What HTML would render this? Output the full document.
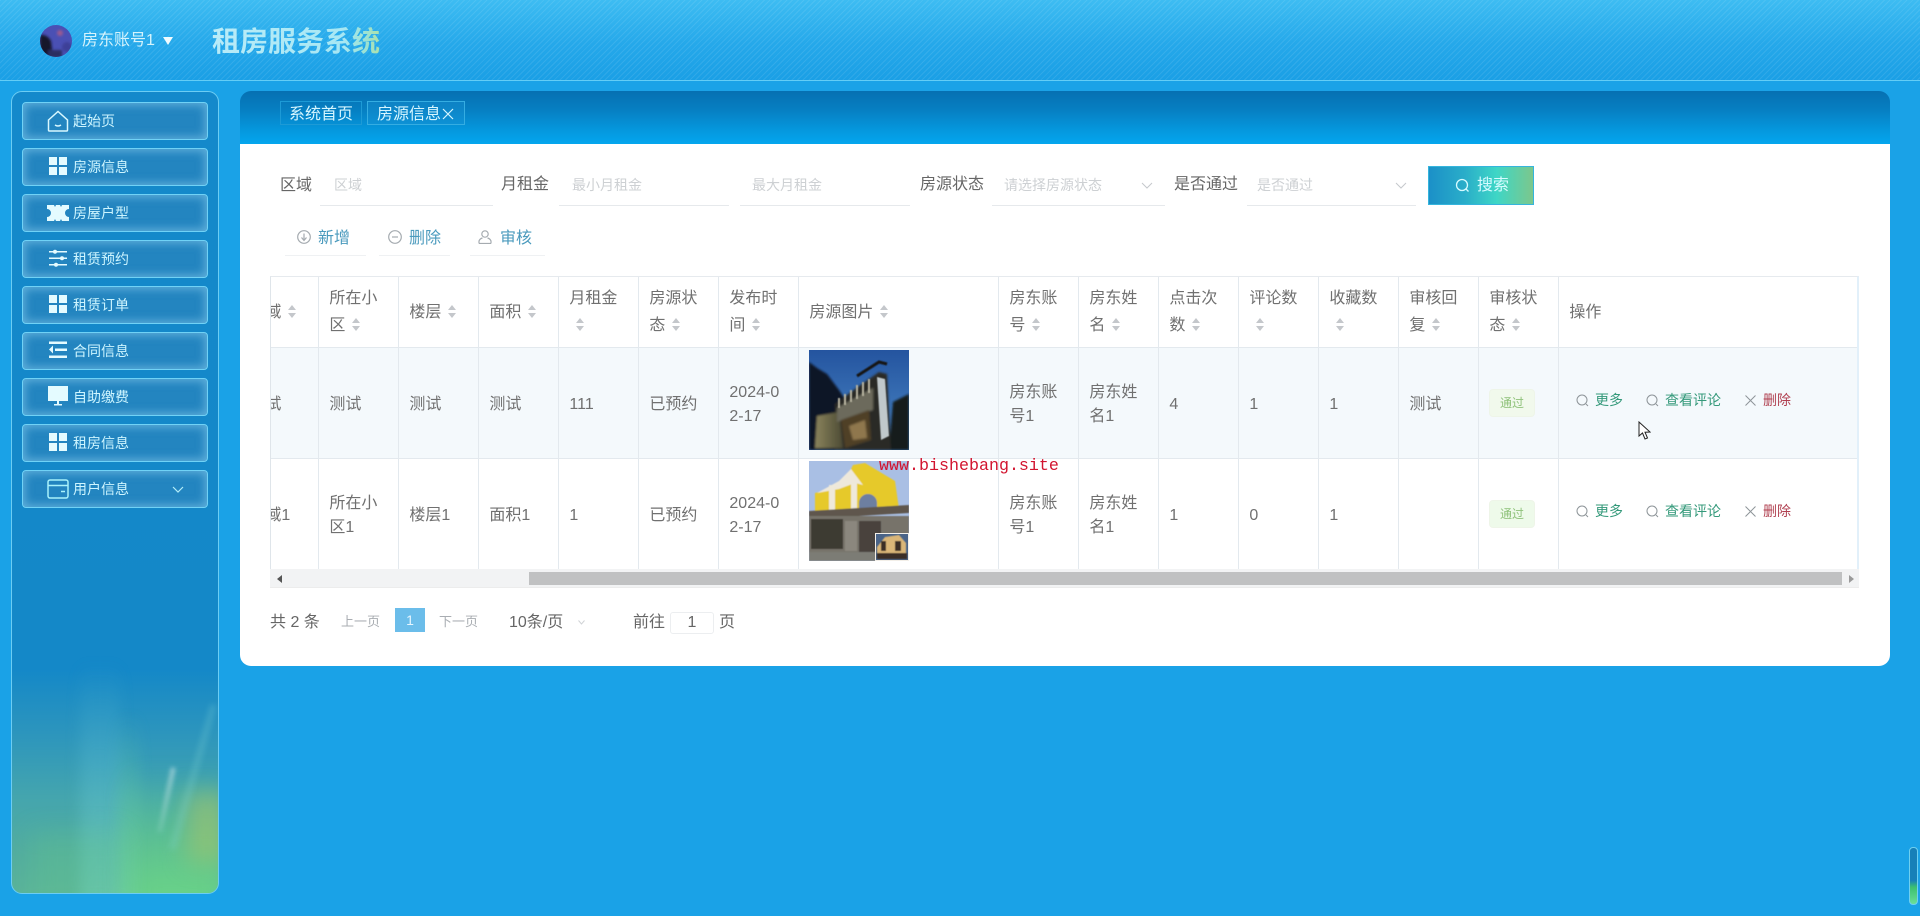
<!DOCTYPE html>
<html lang="zh"><head><meta charset="utf-8"><title>租房服务系统</title>
<style>
*{box-sizing:border-box}
html,body{margin:0;padding:0}
body{width:1920px;height:916px;position:relative;overflow:hidden;background:#19a1e6;font-family:"Liberation Sans","Noto Sans CJK SC",sans-serif;color:#666}
#w{position:absolute;left:0;top:0;width:1920px;height:916px;overflow:hidden;background:#1aa2e7;filter:blur(.35px)}
.a{position:absolute;white-space:nowrap}
#hd{left:0;top:0;width:1920px;height:81px;border-bottom:1px solid #63cdf6;background:repeating-linear-gradient(135deg,rgba(255,255,255,.09) 0 1px,rgba(255,255,255,0) 1px 4px),linear-gradient(180deg,#3dbcf2 0,#25a8ea 55%,#1a9fe5 100%)}
#title{left:212px;top:24px;font-size:28px;font-weight:bold;line-height:36px;background:linear-gradient(90deg,#c9f3fa 0,#b5eef5 78%,#a9e8cf 92%,#bfe8a0 100%);-webkit-background-clip:text;background-clip:text;color:transparent;opacity:.9}
#side{left:11px;top:91px;width:208px;height:803px;border:1px solid #6ccdf3;border-radius:11px;overflow:hidden;background:linear-gradient(180deg,#1489cb 0,#1488c8 72%,#2c95bd 80%,#44a5ae 88%,#52ad9f 95%,#5ab39a 100%)}
.st{position:absolute}
.m{position:absolute;left:22px;width:186px;height:38px;border:1px solid #70d2f6;border-radius:4px;background:#2385c0;box-shadow:inset 0 0 9px 2px rgba(160,220,248,.5);color:#cdf5ff;font-size:14px;line-height:36px;padding-left:50px}
.m svg{position:absolute;left:25px;top:7px}
.lb{font-size:16px;color:#666;line-height:22px}
.ph{font-size:14px;color:#cdd0d3;line-height:20px}
.ul{height:1px;background:#e6e9ec}
.act{font-size:16px;color:#4a9abd;line-height:22px}
.ic{fill:none;stroke:#a5abb0;stroke-width:1.2}
#tw{left:270px;top:276px;width:1589px;height:293px;overflow:hidden;border-top:1px solid #e6eaee;border-left:1px solid #dfe5ea;border-right:2px solid #e2f0fa}
table{position:absolute;left:-31.6px;top:0;border-collapse:separate;border-spacing:0;table-layout:fixed;width:1620px;font-size:16px;color:#707070;white-space:normal}
th,td{border-right:1px solid #e3e9ee;border-bottom:1px solid #e3e9ee;padding:0 10px;text-align:left;font-weight:normal;word-break:break-all}
th{height:71px;line-height:27px}
td{height:111px;line-height:24px;padding-top:3px}
th:last-child,td:last-child{border-right:0}
.r1 td{background:#f4f9fc}
th svg{display:inline-block;width:10px;height:13px;margin-left:6px;vertical-align:-1px}
.tag{position:absolute;width:46px;height:28px;background:#f1f9ec;border:1px solid #eef5e8;border-radius:4px;font-size:12px;color:#8fc27a;line-height:26px;text-align:center}
.op{font-size:14px;line-height:20px}
.g{color:#34997a}.rd{color:#b04050}
</style></head><body>
<div id="w">
<div class="a" id="hd"></div>
<svg class="a" style="left:40px;top:25px" width="32" height="32" viewBox="0 0 32 32"><defs><clipPath id="av"><circle cx="16" cy="16" r="16"/></clipPath><filter id="b0"><feGaussianBlur stdDeviation="1.2"/></filter></defs><g clip-path="url(#av)"><rect width="32" height="32" fill="#4a50b4"/><g filter="url(#b0)"><path d="M0 10Q7 9 11 16L13 32H0Z" fill="#14182c"/><circle cx="20" cy="8" r="3" fill="#9a5a90"/><circle cx="27" cy="22" r="5" fill="#3e3f98"/><rect x="8" y="25" width="14" height="8" fill="#2a2d60"/></g></g></svg>
<div class="a" style="left:82px;top:30px;font-size:16px;line-height:22px;color:#d4f3fc">房东账号1</div>
<svg class="a" style="left:163px;top:37px" width="10" height="8"><path d="M0 0H10L5 8Z" fill="#f0fbff"/></svg>
<div class="a" id="title">租房服务系统</div>

<div class="a" id="side">
<div class="st" style="left:68px;top:570px;width:40px;height:250px;background:linear-gradient(0deg,rgba(120,215,200,.5),rgba(90,190,215,.32) 60%,rgba(90,190,215,0));filter:blur(7px)"></div>
<div class="st" style="left:104px;top:620px;width:24px;height:200px;background:linear-gradient(0deg,rgba(120,225,170,.5),rgba(110,215,190,0));filter:blur(6px)"></div>
<div class="st" style="left:118px;top:680px;width:100px;height:140px;background:linear-gradient(0deg,rgba(110,220,130,.85),rgba(105,215,130,.3) 70%,rgba(105,215,130,0));filter:blur(12px)"></div>
<div class="st" style="left:20px;top:740px;width:90px;height:80px;background:rgba(100,200,140,.3);filter:blur(12px)"></div>
<div class="st" style="left:175px;top:700px;width:40px;height:70px;background:rgba(165,195,105,.6);filter:blur(12px)"></div>
<div class="st" style="left:152px;top:675px;width:5px;height:66px;background:linear-gradient(180deg,rgba(225,240,240,.5),rgba(170,230,220,.2));transform:rotate(12deg);filter:blur(2px)"></div>
<div class="st" style="left:178px;top:610px;width:6px;height:150px;background:rgba(130,215,215,.25);transform:rotate(16deg);filter:blur(3px)"></div>
</div>

<div class="m" style="top:102px"><svg width="22" height="22" viewBox="0 0 22 22" style="top:7px;left:24px" fill="none" stroke="#d8f8ff" stroke-width="1.500"><path d="M1.500 10 11 1.500 20.500 10V20a1 1 0 0 1-1 1H2.500a1 1 0 0 1-1-1Z"/><path d="M8 15q3 2 6 0"/></svg>起始页</div>
<div class="m" style="top:148px"><svg width="20" height="20" viewBox="0 0 20 20" fill="#e4fbff"><path d="M1 1h8v8H1zM11 1h8v8h-8zM1 11h8v8H1zM11 11h8v8h-8z"/></svg>房源信息</div>
<div class="m" style="top:194px"><svg width="22" height="18" viewBox="0 0 22 18" style="top:9px;left:24px" fill="#e4fbff"><path d="M0 1h7l1 2 1-2h4l1 2 1-2h7v4a4 4 0 0 0 0 8v4h-7l-1-2-1 2H9l-1-2-1 2H0v-4a4 4 0 0 0 0-8Z"/></svg>房屋户型</div>
<div class="m" style="top:240px"><svg width="20" height="20" viewBox="0 0 20 20" fill="#e4fbff"><path d="M1 3h18v1.500H1zM1 9.500h18V11H1zM1 16h18v1.500H1z"/><circle cx="7" cy="3.700" r="2"/><circle cx="14" cy="10.200" r="2"/><circle cx="8" cy="16.700" r="2"/></svg>租赁预约</div>
<div class="m" style="top:286px"><svg width="20" height="20" viewBox="0 0 20 20" fill="#e4fbff"><path d="M1 1h8v8H1zM11 1h8v8h-8zM1 11h8v8H1zM11 11h8v8h-8z"/></svg>租赁订单</div>
<div class="m" style="top:332px"><svg width="20" height="20" viewBox="0 0 20 20" fill="#e4fbff"><path d="M1 1.500h18v2.500H1zM7 8.500h12V11H7zM1 15.500h18V18H1zM5 5.500v8L1 9.500Z"/></svg>合同信息</div>
<div class="m" style="top:378px"><svg width="20" height="20" viewBox="0 0 20 20" fill="#e4fbff"><path d="M0 0h20v15H0zM6 18h8v1.500H6zM9 15h2v3H9z"/></svg>自助缴费</div>
<div class="m" style="top:424px"><svg width="20" height="20" viewBox="0 0 20 20" fill="#e4fbff"><path d="M1 1h8v8H1zM11 1h8v8h-8zM1 11h8v8H1zM11 11h8v8h-8z"/></svg>租房信息</div>
<div class="m" style="top:470px"><svg width="22" height="20" viewBox="0 0 22 20" style="left:24px;top:8px" fill="none" stroke="#a8f2fb" stroke-width="1.500"><rect x="1" y="1" width="20" height="18" rx="2"/><path d="M1 6.500h20M14 12.500h4"/></svg>用户信息<svg width="12" height="8" viewBox="0 0 12 8" style="left:149px;top:15px" fill="none" stroke="#b4eef9" stroke-width="1.200"><path d="M1 1l5 5 5-5"/></svg></div>

<div class="a" style="left:240px;top:91px;width:1650px;height:53px;border-radius:11px 11px 0 0;background:linear-gradient(180deg,#0670b2 0,#067fc2 35%,#0598de 75%,#04a6ee 100%)"></div>
<div class="a" style="left:280px;top:101px;width:82px;height:24px;border:1px solid #1d9ad6;font-size:16px;line-height:26px;color:#d6f6ff;text-align:center">系统首页</div>
<div class="a" style="left:367px;top:101px;width:98px;height:24px;border:1px solid #35ade2;background:rgba(30,150,215,.35);font-size:16px;line-height:26px;color:#d6f6ff;padding-left:9px">房源信息<svg width="12" height="12" viewBox="0 0 12 12" style="margin-left:1px;vertical-align:-1px" fill="none" stroke="#d6f6ff" stroke-width="1.200"><path d="M1 1l10 10M11 1 1 11"/></svg></div>

<div class="a" style="left:240px;top:144px;width:1650px;height:522px;background:#fff;border-radius:0 0 11px 11px"></div>

<div class="a lb" style="left:280px;top:175px">区域</div>
<div class="a ph" style="left:334px;top:175px">区域</div><div class="a ul" style="left:320px;top:205px;width:173px"></div>
<div class="a lb" style="left:501px;top:174px">月租金</div>
<div class="a ph" style="left:572px;top:175px">最小月租金</div><div class="a ul" style="left:559px;top:205px;width:170px"></div>
<div class="a ph" style="left:752px;top:175px">最大月租金</div><div class="a ul" style="left:740px;top:205px;width:170px"></div>
<div class="a lb" style="left:920px;top:174px">房源状态</div>
<div class="a ph" style="left:1004px;top:175px">请选择房源状态</div><div class="a ul" style="left:992px;top:205px;width:173px"></div>
<svg class="a" style="left:1141px;top:182px" width="12" height="8" fill="none" stroke="#c5c8cc"><path d="M1 1l5 5 5-5"/></svg>
<div class="a lb" style="left:1174px;top:174px">是否通过</div>
<div class="a ph" style="left:1257px;top:175px">是否通过</div><div class="a ul" style="left:1247px;top:205px;width:169px"></div>
<svg class="a" style="left:1395px;top:182px" width="12" height="8" fill="none" stroke="#c5c8cc"><path d="M1 1l5 5 5-5"/></svg>
<div class="a" style="left:1428px;top:166px;width:106px;height:39px;background:linear-gradient(90deg,#1b90c8 0,#2aaec9 35%,#3ed6c6 65%,#7cc78c 100%);border:1px solid #35b5dd;color:#d6fbff;font-size:16px;line-height:37px;padding-left:48px">搜索<svg width="15" height="15" viewBox="0 0 15 15" style="position:absolute;left:26px;top:11px" fill="none" stroke="#d6fbff" stroke-width="1.300"><circle cx="7" cy="7" r="5.500"/><path d="M11 11l2.500 2.500"/></svg></div>

<svg class="a ic" style="left:297px;top:230px" width="14" height="14" viewBox="0 0 14 14"><circle cx="7" cy="7" r="6.300"/><path d="M7 3.500v7M4.500 7.500 7 10.500 9.500 7.500"/></svg>
<div class="a act" style="left:318px;top:228px">新增</div><div class="a ul" style="left:285px;top:255px;width:81px;background:#eff1f3"></div>
<svg class="a ic" style="left:388px;top:230px" width="14" height="14" viewBox="0 0 14 14"><circle cx="7" cy="7" r="6.300"/><path d="M4 7h6"/></svg>
<div class="a act" style="left:409px;top:228px">删除</div><div class="a ul" style="left:379px;top:255px;width:71px;background:#eff1f3"></div>
<svg class="a ic" style="left:478px;top:230px" width="14" height="14" viewBox="0 0 14 14"><circle cx="7" cy="4" r="3.200"/><path d="M1 13.500V11q1-2.500 3.500-3M13 13.500V11q-1-2.500-3.500-3M1 13.500h12"/></svg>
<div class="a act" style="left:500px;top:228px">审核</div><div class="a ul" style="left:470px;top:255px;width:75px;background:#eff1f3"></div>

<div class="a" id="tw">
<table>
<colgroup><col style="width:80px"><col style="width:80px"><col style="width:80px"><col style="width:80px"><col style="width:80px"><col style="width:80px"><col style="width:80px"><col style="width:200px"><col style="width:80px"><col style="width:80px"><col style="width:80px"><col style="width:80px"><col style="width:80px"><col style="width:80px"><col style="width:80px"><col style="width:300px"></colgroup>
<tr>
<th>区域<svg viewBox="0 0 10 13"><path d="M5 0l4 5H1zM5 13l4-5H1z" fill="#c4c7cb"/></svg></th>
<th>所在小区<svg viewBox="0 0 10 13"><path d="M5 0l4 5H1zM5 13l4-5H1z" fill="#c4c7cb"/></svg></th>
<th>楼层<svg viewBox="0 0 10 13"><path d="M5 0l4 5H1zM5 13l4-5H1z" fill="#c4c7cb"/></svg></th>
<th>面积<svg viewBox="0 0 10 13"><path d="M5 0l4 5H1zM5 13l4-5H1z" fill="#c4c7cb"/></svg></th>
<th>月租金<br><svg viewBox="0 0 10 13"><path d="M5 0l4 5H1zM5 13l4-5H1z" fill="#c4c7cb"/></svg></th>
<th>房源状态<svg viewBox="0 0 10 13"><path d="M5 0l4 5H1zM5 13l4-5H1z" fill="#c4c7cb"/></svg></th>
<th>发布时间<svg viewBox="0 0 10 13"><path d="M5 0l4 5H1zM5 13l4-5H1z" fill="#c4c7cb"/></svg></th>
<th>房源图片<svg viewBox="0 0 10 13"><path d="M5 0l4 5H1zM5 13l4-5H1z" fill="#c4c7cb"/></svg></th>
<th>房东账号<svg viewBox="0 0 10 13"><path d="M5 0l4 5H1zM5 13l4-5H1z" fill="#c4c7cb"/></svg></th>
<th>房东姓名<svg viewBox="0 0 10 13"><path d="M5 0l4 5H1zM5 13l4-5H1z" fill="#c4c7cb"/></svg></th>
<th>点击次数<svg viewBox="0 0 10 13"><path d="M5 0l4 5H1zM5 13l4-5H1z" fill="#c4c7cb"/></svg></th>
<th>评论数<br><svg viewBox="0 0 10 13"><path d="M5 0l4 5H1zM5 13l4-5H1z" fill="#c4c7cb"/></svg></th>
<th>收藏数<br><svg viewBox="0 0 10 13"><path d="M5 0l4 5H1zM5 13l4-5H1z" fill="#c4c7cb"/></svg></th>
<th>审核回复<svg viewBox="0 0 10 13"><path d="M5 0l4 5H1zM5 13l4-5H1z" fill="#c4c7cb"/></svg></th>
<th>审核状态<svg viewBox="0 0 10 13"><path d="M5 0l4 5H1zM5 13l4-5H1z" fill="#c4c7cb"/></svg></th>
<th>操作</th>
</tr>
<tr class="r1"><td>测试</td><td>测试</td><td>测试</td><td>测试</td><td>111</td><td>已预约</td><td>2024-0<br>2-17</td><td></td><td>房东账号1</td><td>房东姓名1</td><td>4</td><td>1</td><td>1</td><td>测试</td><td></td><td></td></tr>
<tr><td>区域1</td><td>所在小区1</td><td>楼层1</td><td>面积1</td><td>1</td><td>已预约</td><td>2024-0<br>2-17</td><td></td><td>房东账号1</td><td>房东姓名1</td><td>1</td><td>0</td><td>1</td><td></td><td></td><td></td></tr>
</table>
</div>

<div class="a" style="left:270px;top:569px;width:1589px;height:19px;background:#f2f3f4;border-bottom:1px solid #ececec"></div>
<div class="a" style="left:529px;top:572px;width:1313px;height:13px;background:#c0c1c2"></div>
<svg class="a" style="left:277px;top:575px" width="6" height="8"><path d="M5 0v8L0 4Z" fill="#555"/></svg>
<svg class="a" style="left:1849px;top:575px" width="6" height="8"><path d="M0 0v8l5-4Z" fill="#9a9a9a"/></svg>

<svg class="a" style="left:809px;top:350px" width="100" height="100" viewBox="0 0 100 100">
<defs><linearGradient id="sk" x1="0" y1="0" x2="0" y2="1"><stop offset="0" stop-color="#24549f"/><stop offset=".55" stop-color="#3a72b6"/></linearGradient><linearGradient id="lw" x1="0" y1="0" x2="1" y2="0"><stop offset="0" stop-color="#8a845c"/><stop offset="1" stop-color="#4c4a34"/></linearGradient><filter id="b1"><feGaussianBlur stdDeviation="1"/></filter><filter id="b3"><feGaussianBlur stdDeviation=".5"/></filter></defs>
<rect width="100" height="100" fill="url(#sk)"/>
<g filter="url(#b1)"><path d="M0 12 8 18 18 24 30 40 40 55 38 100H0Z" fill="#0e1626"/><path d="M84 52 92 48 100 44V100H80Z" fill="#121d1e"/><path d="M26 54 50 36 70 22 78 24 82 100H26Z" fill="#2b2a28"/><path d="M8 66 30 62 34 98H6Z" fill="url(#lw)"/><path d="M28 58 64 38V60L28 72Z" fill="#6c6a5c"/><path d="M32 70 60 60 62 90 36 98Z" fill="#4f4028"/><path d="M40 76 56 70 58 88 44 90Z" fill="#8f774e"/></g>
<g filter="url(#b3)"><path d="M68 27 76 29 80 86 72 90Z" fill="#c0c8cb"/><path d="M30 58V48M36 55V44M42 52V40M48 49V35M54 46V32M60 43V29" stroke="#b9b5a2" stroke-width="2"/><path d="M48 26 70 12 78 14" stroke="#161616" stroke-width="3" fill="none"/></g></svg>

<svg class="a" style="left:809px;top:461px" width="100" height="100" viewBox="0 0 100 100">
<defs><filter id="b2"><feGaussianBlur stdDeviation=".6"/></filter></defs>
<rect width="100" height="100" fill="#a9bfe4"/>
<g filter="url(#b2)"><path d="M6 32 30 26 40 12 44 4 56 2 86 20 90 48 30 58 6 60Z" fill="#e6c92c"/><path d="M8 32 30 20 42 8 54 24 46 22 30 28Z" fill="#eee8db"/><path d="M20 24h6v31h-6zM42 22h6v30h-6z" fill="#efe9da"/><path d="M50 42a9 9 0 0 1 18 0v10H50Z" fill="#6d7fa1"/><path d="M0 50 100 44V52L0 58Z" fill="#5f574d"/><rect y="55" width="100" height="38" fill="#77736a"/><rect x="2" y="58" width="32" height="30" fill="#3d3b33"/><rect x="50" y="60" width="22" height="34" fill="#48433c"/><rect x="36" y="60" width="12" height="30" fill="#8b877e"/><rect y="91" width="100" height="9" fill="#7c7b74"/></g>
<rect x="66" y="72" width="34" height="28" fill="#f3efe8"/><rect x="67" y="73" width="32" height="26" fill="#4a6488"/><g filter="url(#b3)"><path d="M68 86 76 76 90 74 97 82V98H68Z" fill="#dab678"/><path d="M72 80h5v10h-5zM86 80h6v10h-6z" fill="#3a2f28"/><rect x="68" y="92" width="30" height="6" fill="#3a2f28"/></g></svg>

<div class="tag" style="left:1489px;top:389px">通过</div>
<div class="tag" style="left:1489px;top:500px;background:#eefaea">通过</div>

<svg class="a" style="left:1576px;top:394px" width="13" height="13" viewBox="0 0 13 13" fill="none" stroke="#8d9498" stroke-width="1"><circle cx="6" cy="6" r="5"/><path d="M10 10l2 2"/></svg>
<div class="a op g" style="left:1595px;top:390px">更多</div>
<svg class="a" style="left:1646px;top:394px" width="13" height="13" viewBox="0 0 13 13" fill="none" stroke="#8d9498" stroke-width="1"><circle cx="6" cy="6" r="5"/><path d="M10 10l2 2"/></svg>
<div class="a op g" style="left:1665px;top:390px">查看评论</div>
<svg class="a" style="left:1745px;top:395px" width="11" height="11" viewBox="0 0 11 11" fill="none" stroke="#8d9498" stroke-width="1"><path d="M.5.500l10 10M10.500.500l-10 10"/></svg>
<div class="a op rd" style="left:1763px;top:390px">删除</div>

<svg class="a" style="left:1576px;top:505px" width="13" height="13" viewBox="0 0 13 13" fill="none" stroke="#8d9498" stroke-width="1"><circle cx="6" cy="6" r="5"/><path d="M10 10l2 2"/></svg>
<div class="a op g" style="left:1595px;top:501px">更多</div>
<svg class="a" style="left:1646px;top:505px" width="13" height="13" viewBox="0 0 13 13" fill="none" stroke="#8d9498" stroke-width="1"><circle cx="6" cy="6" r="5"/><path d="M10 10l2 2"/></svg>
<div class="a op g" style="left:1665px;top:501px">查看评论</div>
<svg class="a" style="left:1745px;top:506px" width="11" height="11" viewBox="0 0 11 11" fill="none" stroke="#8d9498" stroke-width="1"><path d="M.5.500l10 10M10.500.500l-10 10"/></svg>
<div class="a op rd" style="left:1763px;top:501px">删除</div>

<svg class="a" style="left:1638px;top:421px" width="13" height="20" viewBox="0 0 13 20"><path d="M1 1V15L4.500 12 7 18 9.500 17 7 11.200 12 11Z" fill="#fff" stroke="#222" stroke-width="1"/></svg>

<div class="a" style="left:879px;top:457px;font-family:'Liberation Mono',monospace;font-size:16.67px;line-height:20px;color:#d2142f">www.bishebang.site</div>

<div class="a" style="left:270px;top:612px;font-size:16px;line-height:22px;color:#666">共 2 条</div>
<div class="a" style="left:341px;top:612px;font-size:13px;line-height:20px;color:#a9adb2">上一页</div>
<div class="a" style="left:395px;top:608px;width:30px;height:24px;background:#6bbdea;color:#e6f6ff;font-size:14px;line-height:24px;text-align:center">1</div>
<div class="a" style="left:439px;top:612px;font-size:13px;line-height:20px;color:#a9adb2">下一页</div>
<div class="a" style="left:509px;top:612px;font-size:16px;line-height:22px;color:#666">10条/页</div>
<svg class="a" style="left:578px;top:620px" width="7" height="5" fill="none" stroke="#d0d3d6"><path d="M.5.500 3.500 4 6.500.500"/></svg>
<div class="a" style="left:633px;top:612px;font-size:16px;line-height:22px;color:#666">前往</div>
<div class="a" style="left:670px;top:612px;width:44px;height:22px;border:1px solid #eceef0;border-radius:3px;font-size:16px;line-height:20px;text-align:center;color:#666">1</div>
<div class="a" style="left:719px;top:612px;font-size:16px;line-height:22px;color:#666">页</div>

<div class="a" style="left:1909px;top:847px;width:9px;height:58px;border:1px solid #6fd0f0;border-radius:4px;background:linear-gradient(180deg,#1780b8 0,#1780b8 58%,#3cc070 70%,#6ade98 100%)"></div>
</div>
</body></html>
